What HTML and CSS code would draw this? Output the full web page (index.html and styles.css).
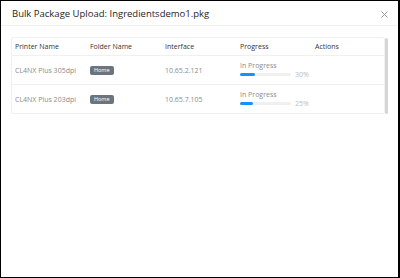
FILE: index.html
```html
<!DOCTYPE html>
<html lang="en">
<head>
    <meta charset="UTF-8">
    <meta name="viewport" content="width=device-width, initial-scale=1.0">
    <title>Bulk Package Upload</title>
    <link rel="stylesheet" href="styles.css">
</head>
<body>
    <div class="modal">
        <div class="modal-header">
            <h1 class="modal-title">Bulk Package Upload: Ingredientsdemo1.pkg</h1>
            <svg class="modal-close" width="7" height="7" viewBox="0 0 7 7">
                <path d="M0.5 0.5 L6.5 6.5 M6.5 0.5 L0.5 6.5" stroke="#8c8c8c" stroke-width="0.9" fill="none"/>
            </svg>
        </div>

        <div class="modal-body">
            <div class="table-wrap">
                <div class="table">
                    <div class="row head">
                        <div class="cell">Printer Name</div>
                        <div class="cell">Folder Name</div>
                        <div class="cell">Interface</div>
                        <div class="cell">Progress</div>
                        <div class="cell">Actions</div>
                    </div>

                    <div class="row">
                        <div class="cell">CL4NX Plus 305dpi</div>
                        <div class="cell"><span class="badge">Home</span></div>
                        <div class="cell">10.65.2.121</div>
                        <div class="cell progress-cell">
                            <div class="progress-label">In Progress</div>
                            <div class="progress-line">
                                <div class="progress-track"><div class="progress-fill" style="width: 30%"></div></div>
                                <span class="progress-pct">30%</span>
                            </div>
                        </div>
                        <div class="cell"></div>
                    </div>

                    <div class="row">
                        <div class="cell">CL4NX Plus 203dpi</div>
                        <div class="cell"><span class="badge">Home</span></div>
                        <div class="cell">10.65.7.105</div>
                        <div class="cell progress-cell">
                            <div class="progress-label">In Progress</div>
                            <div class="progress-line">
                                <div class="progress-track"><div class="progress-fill" style="width: 25%"></div></div>
                                <span class="progress-pct">25%</span>
                            </div>
                        </div>
                        <div class="cell"></div>
                    </div>
                </div>
                <div class="scrollbar"></div>
            </div>
        </div>
    </div>
</body>
</html>
```

FILE: styles.css
```css
body {
    margin: 0;
    font-family: "Open Sans", "Liberation Sans", sans-serif;
    background: #fff;
    color: #333;
}

/* Окно */
.modal {
    box-sizing: border-box;
    width: 400px;
    height: 278px;
    border: 1px solid #000;
    border-right-width: 2px;
    background: #fff;
}

.modal-header {
    display: flex;
    align-items: center;
    justify-content: space-between;
    height: 24px;
    padding: 0 10px 0 11px;
    border-bottom: 1px solid #f0f0f0;
}

.modal-title {
    margin: 0;
    font-size: 9.5px;
    font-weight: 400;
    color: #262626;
}

.modal-close {
    display: block;
    margin-top: 2px;
}

.modal-body {
    padding: 11px 10px 0 10px;
}

/* Таблица */
.table-wrap {
    display: flex;
}

.table {
    flex: 1;
    border: 1px solid #f0f0f0;
    border-radius: 2px;
}

.scrollbar {
    width: 3px;
    margin-top: 1px;
    background: #d6d6d6;
    border-radius: 2px;
}

.row {
    display: grid;
    grid-template-columns: 75px 75px 75px 75px 1fr;
    height: 28px;
    border-bottom: 1px solid #f0f0f0;
    font-size: 7px;
    color: #8c8c8c;
}

.row:last-child {
    border-bottom: none;
}

.row.head {
    height: 17px;
    color: #333;
}

.cell {
    display: flex;
    align-items: center;
    padding-left: 3px;
}

.badge {
    padding: 2px 4px;
    background: #6c757d;
    color: #fff;
    font-size: 5.5px;
    line-height: 5px;
    border-radius: 2px;
}

/* Прогресс */
.progress-cell {
    flex-direction: column;
    align-items: flex-start;
    justify-content: center;
}

.progress-line {
    display: flex;
    align-items: center;
    gap: 4px;
}

.progress-track {
    width: 51px;
    height: 3px;
    background: #f0f0f0;
    border-radius: 2px;
}

.progress-fill {
    height: 100%;
    background: #1890ff;
    border-radius: 2px;
}

.progress-pct {
    color: #bbb;
}
```
